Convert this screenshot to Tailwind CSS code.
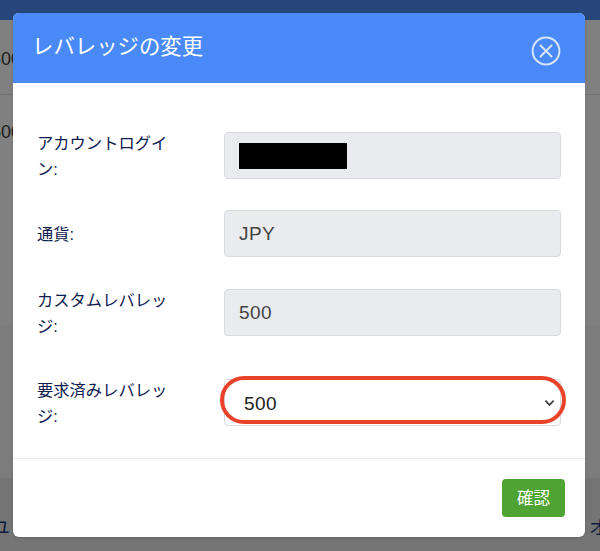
<!DOCTYPE html>
<html lang="ja">
<head>
    <meta charset="UTF-8">
    <title>レバレッジの変更</title>
    <script src="https://cdn.jsdelivr.net/npm/@tailwindcss/browser@4"></script>
</head>
<body class="relative h-[551px] w-[600px] overflow-hidden bg-[#808080] font-['Helvetica_Neue','Liberation_Sans','Noto_Sans_CJK_JP',sans-serif]">
    <!-- Page behind the overlay -->
    <div class="absolute inset-0 flex flex-col text-[16px] text-[#0d1a3a]">
        <div class="h-[20px] bg-[#27467c]"></div>
        <div class="flex h-[75px] items-center border-b border-[#737373] pt-[4px] text-[#1c1c1c]"><span class="ml-[-9px] text-[18px]">500</span></div>
        <div class="flex h-[75px] items-center text-[#1c1c1c]"><span class="ml-[-9px] text-[18px]">500</span></div>
        <div class="h-[155px]"></div>
        <div class="h-[153px] bg-[#7c7c7c]"></div>
        <div class="flex h-[73px] items-start justify-between bg-[#747474] pt-[38px]">
            <span class="ml-[-8px] text-[18px] leading-[24px]">ユ</span>
            <span class="mr-[-7px] text-[18px] leading-[24px]">オ</span>
        </div>
    </div>

    <!-- Modal -->
    <div class="absolute left-[13px] top-[13px] flex h-[524px] w-[572px] flex-col overflow-hidden rounded-md bg-white shadow-sm">
        <div class="flex h-[70px] items-start justify-between bg-[#4a8af8] pl-[19px] pr-[24px]">
            <h2 class="mt-[20px] text-[21.4px] leading-[28px] text-white">レバレッジの変更</h2>
            <svg class="mt-[23px]" width="30" height="30" viewBox="0 0 30 30" fill="none" stroke="#d6e4fd" stroke-linecap="round">
                <circle cx="15" cy="15" r="13.4" stroke-width="2"/>
                <path d="M9.5 9.5l11 11M20.5 9.5l-11 11" stroke-width="2"/>
            </svg>
        </div>

        <div class="flex flex-1 flex-col pl-[24px] pr-[24px] pt-[49px] text-[16.3px] text-[#0f2050]">
            <div class="flex h-[47px] items-center">
                <label class="mt-[1px] w-[187px] shrink-0 pr-[50px] leading-[26px]">アカウントログイン:</label>
                <div class="flex h-full flex-1 items-center rounded border border-[#d8dae0] bg-[#e9ebef] pl-[14px]">
                    <div class="h-[26px] w-[108px] bg-black"></div>
                </div>
            </div>
            <div class="mt-[31px] flex h-[47px] items-center">
                <label class="w-[187px] shrink-0 pr-[50px] leading-[26px]">通貨:</label>
                <div class="flex h-full flex-1 items-center rounded border border-[#d8dae0] bg-[#e9ebef] pl-[14px] pt-[2px] text-[19px] tracking-[0.4px] text-[#444]">JPY</div>
            </div>
            <div class="mt-[32px] flex h-[47px] items-center">
                <label class="mt-[1px] w-[187px] shrink-0 pr-[50px] leading-[26px]">カスタムレバレッジ:</label>
                <div class="flex h-full flex-1 items-center rounded border border-[#d8dae0] bg-[#e9ebef] pl-[14px] pt-[2px] text-[19px] tracking-[0.4px] text-[#444]">500</div>
            </div>
            <div class="mt-[43px] flex h-[47px] items-center">
                <label class="mt-[1px] w-[187px] shrink-0 pr-[50px] leading-[26px]">要求済みレバレッジ:</label>
                <div class="relative flex h-full flex-1 items-center rounded border border-[#d8dae0] pl-[19px] text-[19px] tracking-[0.4px] text-[#222]">
                    <span class="mt-[3px]">500</span>
                    <svg class="absolute right-[5px] top-[19px]" width="11" height="8" viewBox="0 0 12 8" fill="none" stroke="#444" stroke-width="2"><path d="M1.5 1.5L6 6l4.5-4.5"/></svg>
                </div>
            </div>
        </div>

        <div class="flex h-[79px] items-start justify-end border-t border-[#e9ebef] pr-[20px] pt-[20px]">
            <button class="h-[38px] w-[63px] rounded bg-[#4fa332] text-[16.5px] text-white">確認</button>
        </div>
    </div>

    <!-- Red annotation -->
    <div class="absolute left-[220px] top-[376px] h-[48px] w-[346px] rounded-[24px] border-4 border-[#e8432a]"></div>
</body>
</html>
